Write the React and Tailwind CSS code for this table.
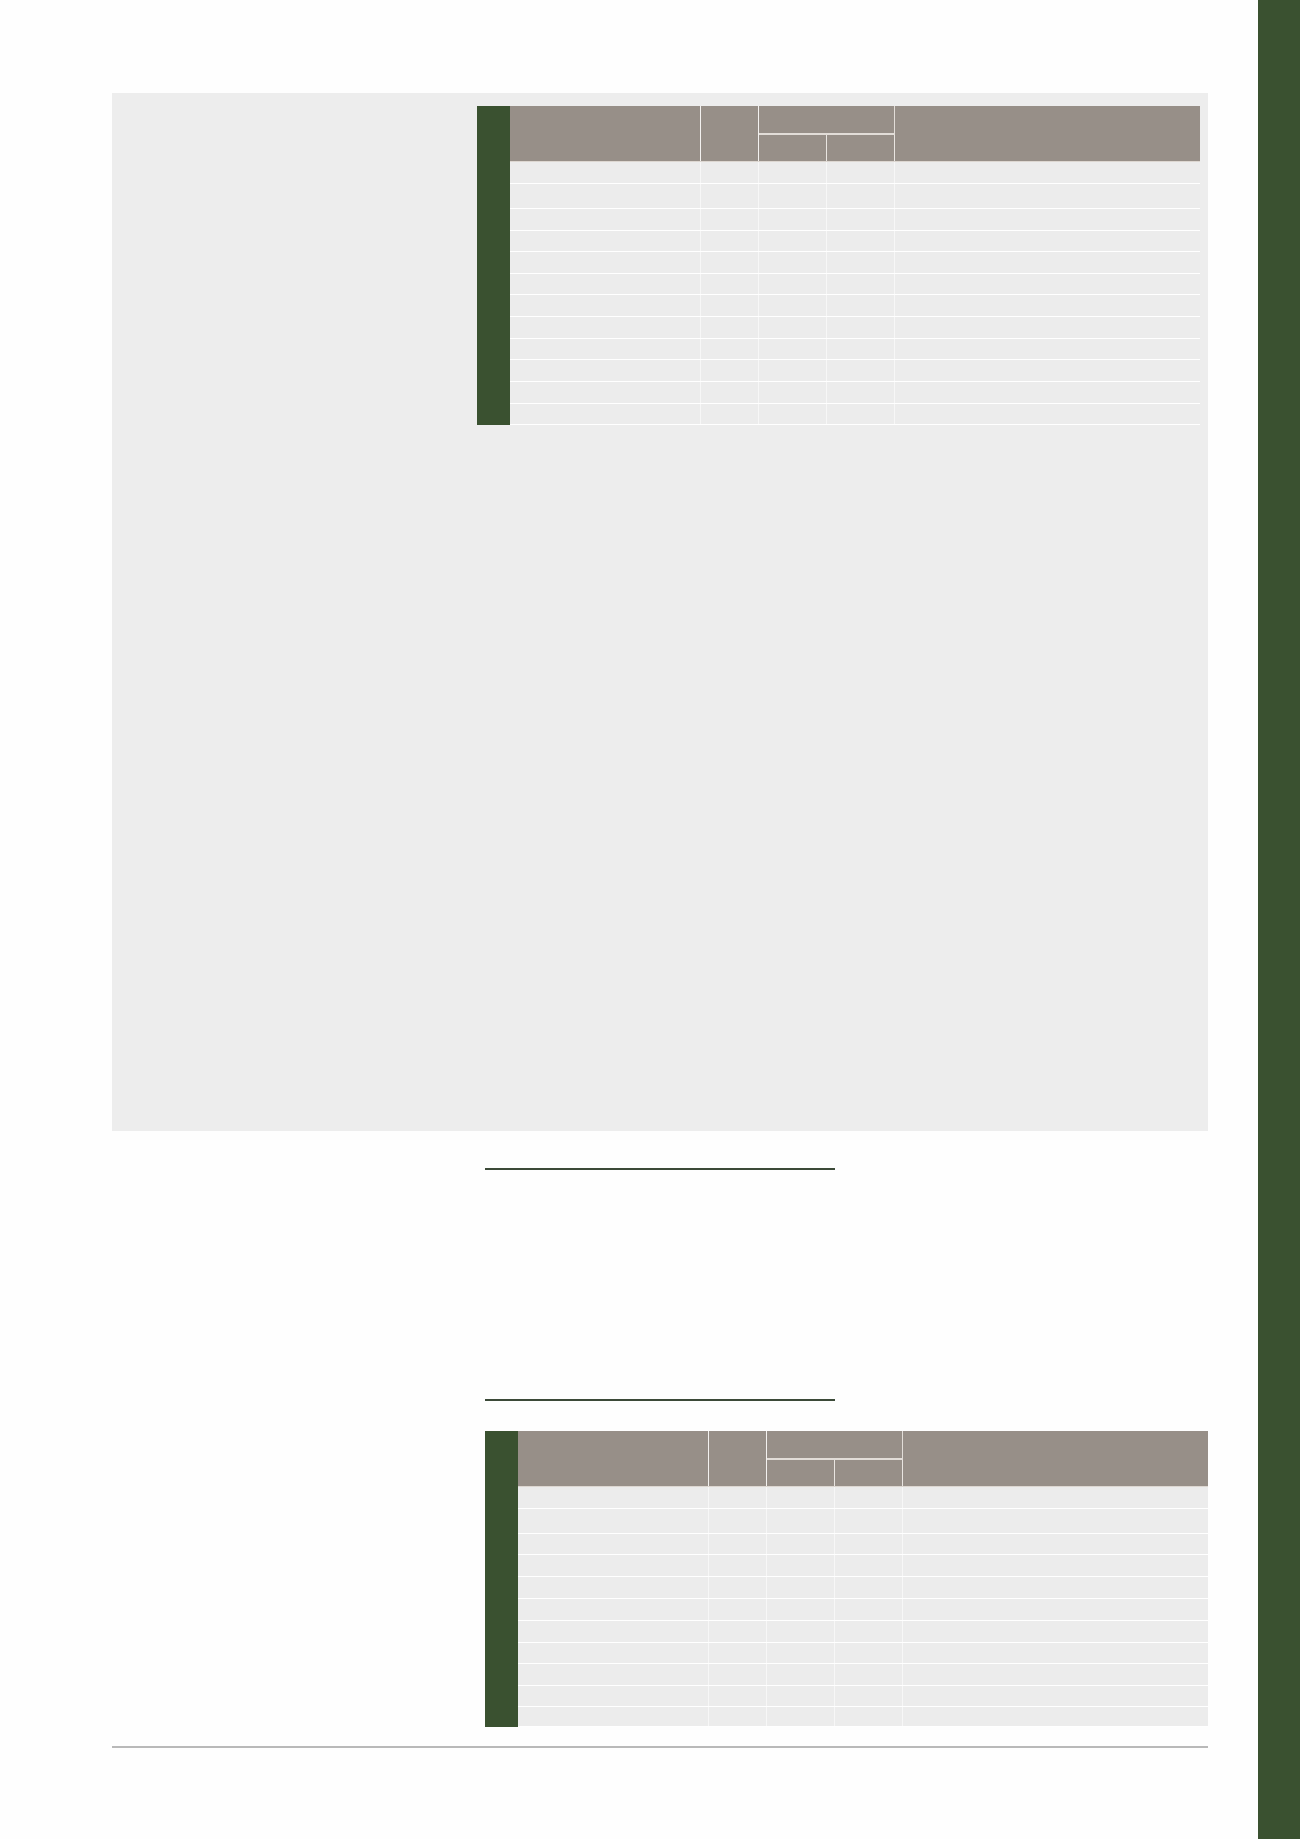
import React from "react";

const COLS = "grid grid-cols-[191px_58px_68px_68px_305px]";

function Header() {
  return (
    <div className={`${COLS} grid-rows-[29px_26px] border-b border-[#ddd7d1]`}>
      <div className="row-span-2 bg-[#978f88] border-r border-[#f3f1ef]" />
      <div className="row-span-2 bg-[#978f88] border-r border-[#f3f1ef]" />
      <div className="col-span-2 bg-[#978f88] border-r border-b-2 border-[#e2ddd8]" />
      <div className="row-span-2 bg-[#978f88]" />
      <div className="bg-[#978f88] border-r border-[#e9e5e1]" />
      <div className="bg-[#978f88] border-r border-[#e9e5e1]" />
    </div>
  );
}

function Row({ h }) {
  return (
    <div className={`${COLS} border-b border-white bg-[#ececec]`} style={{ height: h }}>
      <div className="border-r border-[#f7f7f7]" />
      <div className="border-r border-[#f7f7f7]" />
      <div className="border-r border-[#f7f7f7]" />
      <div className="border-r border-[#f7f7f7]" />
      <div />
    </div>
  );
}

function Table({ rows }) {
  return (
    <div className="flex">
      <div className="w-[33px] bg-[#3a5130]" />
      <div className="w-[690px]">
        <Header />
        {rows.map((h, i) => (
          <Row key={i} h={h} />
        ))}
      </div>
    </div>
  );
}

export default function App() {
  const rows1 = [22, 25, 22, 21, 22, 21, 22, 22, 21, 22, 22, 21];
  const rows2 = [22, 25, 21, 22, 22, 22, 22, 21, 22, 21, 20];
  return (
    <div className="flex min-h-[1839px] w-[1300px] bg-[#fefefe] font-['Liberation_Sans',Arial,sans-serif]">
      <div className="w-[1258px] pl-[112px]">
        <div className="mt-[93px] h-[1038px] w-[1096px] bg-[#ededed] pt-[13px] pl-[365px]">
          <Table rows={rows1} />
        </div>
        <div className="ml-[373px] mt-[37px] h-[2px] w-[350px] bg-[#3c4a38]" />
        <div className="ml-[373px] mt-[229px] h-[2px] w-[350px] bg-[#3c4a38]" />
        <div className="ml-[373px] mt-[30px]">
          <Table rows={rows2} />
        </div>
        <div className="mt-[19px] h-[2px] w-[1096px] bg-[#b9b9b9]" />
      </div>
      <div className="w-[42px] bg-[#3a5130]" />
    </div>
  );
}
